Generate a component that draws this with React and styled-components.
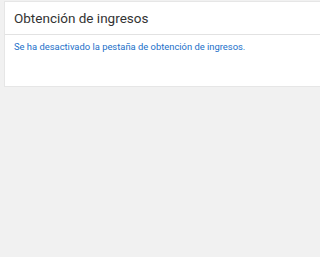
import React from 'react';
import styled, { createGlobalStyle } from 'styled-components';

const Global = createGlobalStyle`
  html, body {
    margin: 0;
    padding: 0;
    background: #f1f1f1;
    font-family: Roboto, "Liberation Sans", sans-serif;
  }
`;

const Page = styled.div`
  padding: 1px 0 0 4px;
  min-height: 257px;
  box-sizing: border-box;
`;

const Card = styled.section`
  background: #fff;
  border: 1px solid #e6e6e6;
  border-right: none;
  height: 86px;
  box-sizing: border-box;
`;

const Header = styled.div`
  height: 32px;
  padding: 0 9px;
  display: flex;
  align-items: center;
  border-bottom: 1px solid #e2e2e2;
  font-size: 13.5px;
  color: #333;
`;

const Body = styled.div`
  padding: 6px 9px;
  font-size: 9.4px;
  color: #1a6fc9;
`;

export default function App() {
  return (
    <Page>
      <Global />
      <Card>
        <Header>Obtención de ingresos</Header>
        <Body>Se ha desactivado la pestaña de obtención de ingresos.</Body>
      </Card>
    </Page>
  );
}
